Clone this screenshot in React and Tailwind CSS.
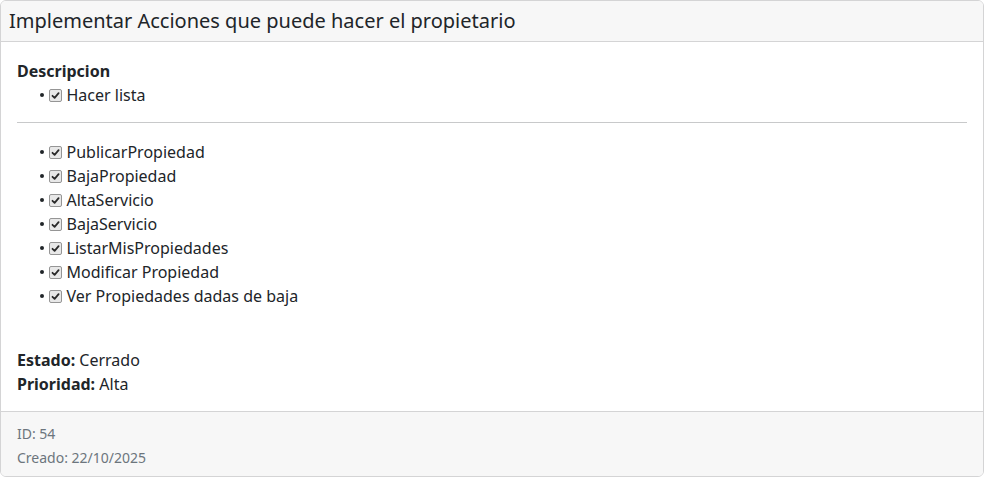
import React from "react";

const items = [
  "PublicarPropiedad",
  "BajaPropiedad",
  "AltaServicio",
  "BajaServicio",
  "ListarMisPropiedades",
  "Modificar Propiedad",
  "Ver Propiedades dadas de baja",
];

function Check() {
  return (
    <span className="inline-flex items-center justify-center w-[13px] h-[13px] rounded-[2px] border border-[#959595] bg-[#e8e8e8]">
      <svg width="9" height="9" viewBox="0 0 9 9">
        <path d="M1.5 4.8 L3.6 6.8 L7.6 2.2" fill="none" stroke="#2a2a2a" strokeWidth="1.8" strokeLinecap="round" strokeLinejoin="round" />
      </svg>
    </span>
  );
}

function Item({ children }) {
  return (
    <li className="flex items-center h-6 leading-6 pl-[23px]">
      <span className="inline-block w-[3.5px] h-[3.5px] rounded-full bg-[#212529] mr-[5px]" />
      <Check />
      <span className="ml-[5px]">{children}</span>
    </li>
  );
}

export default function App() {
  return (
    <div className="w-[984px] bg-white text-[#212529]" style={{ fontFamily: '"Noto Sans", sans-serif' }}>
      <div className="w-full rounded-md border border-[#d4d4d5] overflow-hidden">
        <div className="bg-[#f7f7f7] border-b border-[#d4d4d5] px-2 py-2">
          <h1 className="text-[20px] leading-6 font-normal">Implementar Acciones que puede hacer el propietario</h1>
        </div>
        <div className="px-4 pt-[17px] pb-[15px] text-base">
          <p className="leading-6 font-bold">Descripcion</p>
          <ul>
            <Item>Hacer lista</Item>
          </ul>
          <hr className="mt-[15px] mb-[17px] border-0 border-t border-[#c8c9ca]" />
          <ul>
            {items.map((t) => (
              <Item key={t}>{t}</Item>
            ))}
          </ul>
          <div className="mt-10">
            <p className="leading-6"><strong className="font-bold">Estado:</strong> Cerrado</p>
            <p className="leading-6"><strong className="font-bold">Prioridad:</strong> Alta</p>
          </div>
        </div>
        <div className="bg-[#f7f7f7] border-t border-[#d4d4d5] px-4 pt-[10px] pb-[6px] text-sm text-[#6c757d]">
          <div className="leading-6">ID: 54</div>
          <div className="leading-6">Creado: 22/10/2025</div>
        </div>
      </div>
    </div>
  );
}
